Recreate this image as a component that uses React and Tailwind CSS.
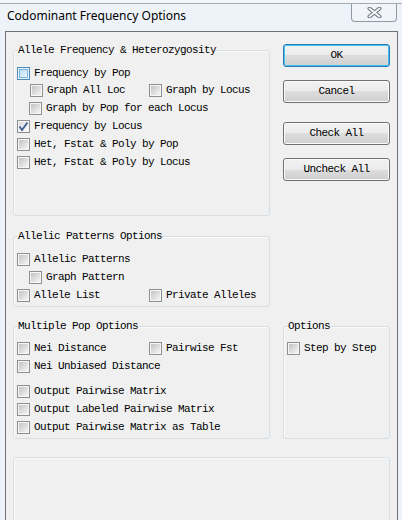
import React from "react";

const mono = "font-['Liberation_Mono',monospace] text-[11px] tracking-[-0.6px] text-black";

function Box({ state }) {
  if (state === "focus") {
    return (
      <span className="flex h-[13px] w-[13px] shrink-0 items-center justify-center border border-[#4f8ab8] bg-[#e4f3fd] p-[1px]">
        <span className="h-[9px] w-[9px] border border-[#7fb4dc] bg-linear-to-br from-[#b5dcf8] to-[#eaf6fe]" />
      </span>
    );
  }
  return (
    <span className="relative flex h-[13px] w-[13px] shrink-0 items-center justify-center border border-[#8e8f8f] bg-[#f6f6f6] p-[1px]">
      <span
        className={
          state === "checked"
            ? "h-[9px] w-[9px] bg-linear-to-br from-[#dcdcdc] to-[#fbfbfb]"
            : "h-[9px] w-[9px] bg-linear-to-br from-[#c4c4c4] to-[#f5f5f5]"
        }
      />
      {state === "checked" && (
        <svg className="absolute left-0 top-0" width="11" height="11" viewBox="0 0 11 11">
          <path d="M1.5 5.5 L4 9 L9.5 1.5" fill="none" stroke="#3f5b96" strokeWidth="1.8" />
        </svg>
      )}
    </span>
  );
}

function Item({ label, state, className = "" }) {
  return (
    <div className={"flex h-[13px] items-center gap-[4px] " + className}>
      <Box state={state} />
      <span className={mono + " leading-[13px] whitespace-nowrap"}>{label}</span>
    </div>
  );
}

function Legend({ children, className = "" }) {
  return (
    <legend className={mono + " leading-[13px] whitespace-nowrap " + className}>{children}</legend>
  );
}

function Button({ children, focused, className = "" }) {
  return (
    <div
      className={
        "flex h-[23px] w-[107px] items-center justify-center rounded-[3px] border bg-[linear-gradient(#f2f2f2,#ebebeb_50%,#dddddd_50%,#cfcfcf)] " +
        (focused
          ? "border-[#2f78b4] shadow-[inset_0_0_0_1px_#40c4f4] "
          : "border-[#707070] shadow-[inset_0_0_0_1px_#fbfbfb] ") +
        className
      }
    >
      <span className={mono + " leading-[13px]"}>{children}</span>
    </div>
  );
}

export default function App() {
  return (
    <div className="relative h-[520px] w-[402px] overflow-hidden bg-[#eef3f9]">
      <div className="h-[4px] border-b border-[#a3acb6] bg-[#f4f6f9]" />
      <div className="flex h-[27px] items-start justify-between pl-[7px] pr-[5px]">
        <div className="mt-[4px] font-['Noto_Sans',sans-serif] text-[12px] leading-[16px] text-black">
          Codominant Frequency Options
        </div>
        <div className="flex h-[18px] w-[46px] items-center justify-center rounded-b-[4px] border border-t-0 border-[#8e99a5] bg-[#f1f5fa]">
          <svg width="15" height="11" viewBox="0 0 15 11">
            <path d="M2.5 1.5 L12.5 9.5 M12.5 1.5 L2.5 9.5" stroke="#6b7480" strokeWidth="4" strokeLinecap="round" fill="none" />
            <path d="M2.5 1.5 L12.5 9.5 M12.5 1.5 L2.5 9.5" stroke="#f4f6f8" strokeWidth="2" strokeLinecap="round" fill="none" />
          </svg>
        </div>
      </div>
      <div className="ml-[5px] h-[520px] w-[393px] border border-[#707070] bg-[#f0f0f0] px-[7px]">
        <div className="flex gap-[13px]">
          <div className="flex w-[257px] flex-col">
            <fieldset className="mt-[12px] rounded-[3px] border border-[#d5dfe5] pb-[46px] pl-[3px] shadow-[inset_1px_1px_0_#fafafa]">
              <Legend className="ml-[1px]">Allele Frequency &amp; Heterozygosity</Legend>
              <div className="mt-[10px] flex flex-col">
                <Item label="Frequency by Pop" state="focus" />
                <div className="mt-[4px] flex pl-[13px]">
                  <Item label="Graph All Loc" className="w-[119px]" />
                  <Item label="Graph by Locus" />
                </div>
                <Item label="Graph by Pop for each Locus" className="mt-[5px] pl-[12px]" />
                <Item label="Frequency by Locus" state="checked" className="mt-[5px]" />
                <Item label="Het, Fstat & Poly by Pop" className="mt-[5px]" />
                <Item label="Het, Fstat & Poly by Locus" className="mt-[5px]" />
              </div>
            </fieldset>
            <fieldset className="mt-[14px] rounded-[3px] border border-[#d5dfe5] pb-[4px] pl-[3px] shadow-[inset_1px_1px_0_#fafafa]">
              <Legend className="ml-[1px]">Allelic Patterns Options</Legend>
              <div className="mt-[10px] flex flex-col">
                <Item label="Allelic Patterns" />
                <Item label="Graph Pattern" className="mt-[5px] pl-[12px]" />
                <div className="mt-[5px] flex">
                  <Item label="Allele List" className="w-[132px]" />
                  <Item label="Private Alleles" />
                </div>
              </div>
            </fieldset>
          </div>
          <div className="mt-[12px] flex w-[107px] flex-col">
            <Button focused>OK</Button>
            <Button className="mt-[13px]">Cancel</Button>
            <Button className="mt-[19px]">Check All</Button>
            <Button className="mt-[13px]">Uncheck All</Button>
          </div>
        </div>
        <div className="mt-[13px] flex gap-[13px]">
          <fieldset className="w-[257px] rounded-[3px] border border-[#d5dfe5] pb-[4px] pl-[3px] shadow-[inset_1px_1px_0_#fafafa]">
            <Legend className="ml-[1px]">Multiple Pop Options</Legend>
            <div className="mt-[9px] flex flex-col">
              <div className="flex">
                <Item label="Nei Distance" className="w-[132px]" />
                <Item label="Pairwise Fst" />
              </div>
              <Item label="Nei Unbiased Distance" className="mt-[5px]" />
              <Item label="Output Pairwise Matrix" className="mt-[12px]" />
              <Item label="Output Labeled Pairwise Matrix" className="mt-[5px]" />
              <Item label="Output Pairwise Matrix as Table" className="mt-[5px]" />
            </div>
          </fieldset>
          <fieldset className="w-[107px] rounded-[3px] border border-[#d5dfe5] pl-[3px] shadow-[inset_1px_1px_0_#fafafa]">
            <Legend className="ml-[1px]">Options</Legend>
            <div className="mt-[9px] flex flex-col">
              <Item label="Step by Step" />
            </div>
          </fieldset>
        </div>
        <div className="mt-[18px] h-[80px] w-[377px] rounded-[3px] border border-[#d5dfe5] shadow-[inset_1px_1px_0_#fafafa]" />
      </div>
    </div>
  );
}
